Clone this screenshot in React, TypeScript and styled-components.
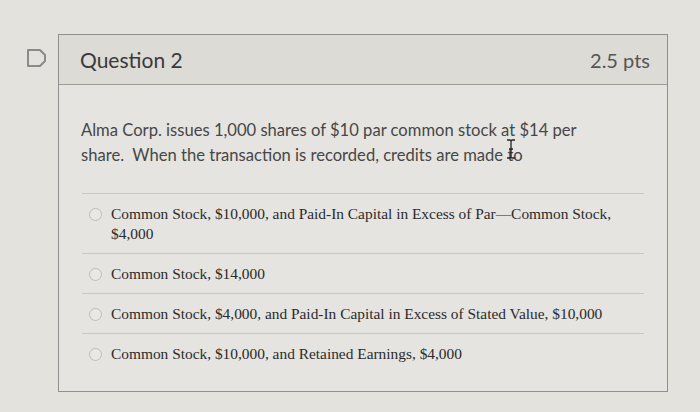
import React from 'react';
import styled, { createGlobalStyle } from 'styled-components';

const GlobalStyle = createGlobalStyle`
  html, body {
    margin: 0;
    padding: 0;
    background: #e3e2dd;
  }
  body {
    font-family: Lato, "Open Sans", sans-serif;
  }
`;

const answers = [
  'Common Stock, $10,000, and Paid-In Capital in Excess of Par\u2014Common Stock, $4,000',
  'Common Stock, $14,000',
  'Common Stock, $4,000, and Paid-In Capital in Excess of Stated Value, $10,000',
  'Common Stock, $10,000, and Retained Earnings, $4,000',
];

const FlagIcon: React.FC = () => (
  <svg width="22" height="20" viewBox="0 0 22 20">
    <path d="M2 2 H14 L19 7 V13 L14 18 H2 Z" fill="none" stroke="#8a8a88" strokeWidth="2" strokeLinejoin="round" />
  </svg>
);

const IBeam: React.FC = () => (
  <svg width="10" height="20" viewBox="0 0 10 20">
    <path d="M1 1 H4 Q5 1 5 3 V17 Q5 19 4 19 H1 M9 1 H6 Q5 1 5 3 M5 17 Q5 19 6 19 H9 M3 10 H7" fill="none" stroke="#222" strokeWidth="1.3" />
  </svg>
);

const App: React.FC = () => {
  return (
    <>
      <GlobalStyle />
      <Page>
        <FlagSlot>
          <FlagIcon />
        </FlagSlot>
        <Card>
          <Header>
            <Title>Question 2</Title>
            <Points>2.5 pts</Points>
          </Header>
          <Body>
            <Prompt>
              Alma Corp. issues 1,000 shares of $10 par common stock at $14 per share.&nbsp; When the transaction
              is recorded, credits are made{' '}
              <CursorWrap>
                to
                <Cursor>
                  <IBeam />
                </Cursor>
              </CursorWrap>
            </Prompt>
            <Answers>
              {answers.map(answer => (
                <Answer key={answer}>
                  <Radio />
                  <AnswerText>{answer}</AnswerText>
                </Answer>
              ))}
            </Answers>
          </Body>
        </Card>
      </Page>
    </>
  );
};

export default App;

const Page = styled.div`
  width: 700px;
  height: 412px;
  box-sizing: border-box;
  padding: 34px 0 0 0;
  display: flex;
  align-items: flex-start;
`;
const FlagSlot = styled.div`
  width: 58px;
  box-sizing: border-box;
  padding: 14px 0 0 26px;
`;
const Card = styled.div`
  width: 610px;
  height: 358px;
  box-sizing: border-box;
  border: 1px solid #90908d;
  background: #e5e4e0;
`;
const Header = styled.div`
  height: 50px;
  box-sizing: border-box;
  display: flex;
  align-items: center;
  justify-content: space-between;
  padding: 0 17px 0 21px;
  background: #dcdbd6;
  border-bottom: 1px solid #9b9b98;
`;
const Title = styled.span`
  font-size: 21px;
  color: #3a3a3a;
`;
const Points = styled.span`
  font-size: 20px;
  color: #555;
`;
const Body = styled.div`
  padding: 33px 23px 0 23px;
`;
const Prompt = styled.p`
  margin: 0 0 0 -1px;
  width: 530px;
  font-size: 16.6px;
  line-height: 25px;
  color: #474747;
`;
const CursorWrap = styled.span`
  position: relative;
`;
const Cursor = styled.span`
  position: absolute;
  left: -1px;
  top: -6px;
  line-height: 0;
`;
const Answers = styled.div`
  margin-top: 25px;
  border-top: 1px solid #c9c8c3;
`;
const Answer = styled.div`
  display: flex;
  align-items: flex-start;
  gap: 9px;
  padding: 10px 0 9px 7px;
  border-bottom: 1px solid #c9c8c3;
  &:last-child {
    border-bottom: none;
  }
`;
const Radio = styled.span`
  flex: none;
  width: 11px;
  height: 11px;
  margin-top: 4px;
  border-radius: 50%;
  border: 1px solid #bdbcb8;
  background: #e9e8e4;
`;
const AnswerText = styled.span`
  font-family: "Liberation Serif", "Times New Roman", serif;
  font-size: 15.4px;
  line-height: 20px;
  color: #2b2b2b;
  max-width: 530px;
`;
